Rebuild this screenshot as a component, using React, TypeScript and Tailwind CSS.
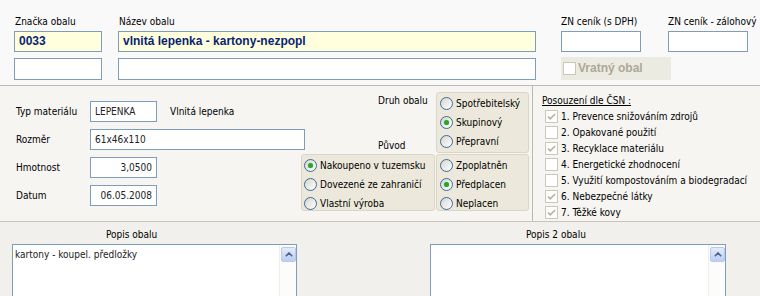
import React from "react";

const font = { fontFamily: '"DejaVu Sans Condensed", "Liberation Sans", Arial, sans-serif' };
const boldFont = { fontFamily: '"Liberation Sans", Arial, sans-serif' };

function Field({
  className,
  children,
}: {
  className?: string;
  children?: React.ReactNode;
}) {
  return (
    <div
      className={`flex items-center border border-[#7f9db9] bg-white px-[4px] text-[10px] text-[#222] ${className ?? ""}`}
    >
      {children}
    </div>
  );
}

function Radio({ label, checked }: { label: string; checked?: boolean }) {
  return (
    <div className="flex h-[19px] items-center gap-[3px] whitespace-nowrap">
      <span className="flex h-[13px] w-[13px] shrink-0 items-center justify-center rounded-full border border-[#3f6a95] bg-linear-to-br from-[#d6d6d0] to-white">
        {checked && (
          <span className="h-[5px] w-[5px] rounded-full bg-[#2aa52a] shadow-[0_0_1px_#6cd36c]" />
        )}
      </span>
      <span>{label}</span>
    </div>
  );
}

function Check({ label, checked }: { label: string; checked?: boolean }) {
  return (
    <div className="flex h-[16px] items-center gap-[3px] whitespace-nowrap">
      <span className="flex h-[13px] w-[13px] shrink-0 items-center justify-center border border-[#cac8bb] bg-white">
        {checked && (
          <svg width="9" height="9" viewBox="0 0 9 9">
            <path d="M1 4.5 L3.3 6.8 L8 2" fill="none" stroke="#b4b1a2" strokeWidth="1.6" />
          </svg>
        )}
      </span>
      <span>{label}</span>
    </div>
  );
}

function ScrollUp() {
  return (
    <div className="flex h-[15px] w-[15px] items-center justify-center rounded-[2px] border border-[#b8c9ee] bg-linear-to-b from-[#e3ebfd] to-[#bccdf5]">
      <svg width="8" height="5" viewBox="0 0 8 5">
        <path d="M0.8 4.2 L4 1 L7.2 4.2" fill="none" stroke="#4d6185" strokeWidth="1.6" />
      </svg>
    </div>
  );
}

function Memo({ width, text }: { width: string; text?: string }) {
  return (
    <div className={`flex h-[60px] border border-[#7f9db9] bg-white ${width}`}>
      <div className="flex-1 px-[2px] pt-[3px] text-[10px] leading-[13px] text-[#222]">{text}</div>
      <div className="w-[17px] border-l border-[#efeee8] bg-[#fcfcfb] pl-px pt-[2px]">
        <ScrollUp />
      </div>
    </div>
  );
}

export default function App() {
  return (
    <div
      style={font}
      className="h-[296px] w-[760px] overflow-hidden bg-[#f1f0ec] text-[10px] leading-[13px] text-black"
    >
      {/* top: code and name */}
      <div className="flex h-[86px] border-b border-[#bcb8ab] bg-[#f9f9fa] pl-[14px]">
        <div className="flex w-[88px] shrink-0 flex-col">
          <div className="h-[31px] whitespace-nowrap pl-px pt-[15px]">Značka obalu</div>
          <Field className="h-[21px] !bg-[#ffffdd] font-bold !text-[12px] !text-[#0a1f73]">
            <span style={boldFont}>0033</span>
          </Field>
          <Field className="mt-[6px] h-[22px]" />
        </div>
        <div className="ml-[16px] flex w-[418px] shrink-0 flex-col">
          <div className="h-[31px] pl-px pt-[15px]">Název obalu</div>
          <Field className="h-[21px] !bg-[#ffffdd] font-bold !text-[12px] !text-[#0a1f73]">
            <span style={boldFont}>vlnitá lepenka - kartony-nezpopl</span>
          </Field>
          <Field className="mt-[6px] h-[22px]" />
        </div>
        <div className="ml-[25px] flex w-[80px] shrink-0 flex-col">
          <div className="h-[31px] whitespace-nowrap pt-[15px]">ZN ceník (s DPH)</div>
          <Field className="h-[21px]" />
          <div className="mt-[5px] flex h-[23px] w-[110px] items-center gap-[2px] whitespace-nowrap bg-[#ecebe2] pl-[2px] text-[12px] font-bold text-[#aca899]">
            <span className="h-[13px] w-[13px] shrink-0 border border-[#cac8bb] bg-white" />
            <span style={boldFont}>Vratný obal</span>
          </div>
        </div>
        <div className="ml-[27px] flex w-[80px] shrink-0 flex-col">
          <div className="h-[31px] whitespace-nowrap pt-[15px]">ZN ceník - zálohový</div>
          <Field className="h-[21px]" />
        </div>
      </div>

      {/* middle: material, kind, assessment */}
      <div className="flex h-[136px] border-b border-[#c9c5b8] bg-[#f6f5f2]">
        <div className="flex w-[533px] shrink-0 border-r border-[#bcb8ab]">
          <div className="flex w-[301px] shrink-0 flex-col gap-[7px] pl-[16px] pt-[15px]">
            <div className="flex h-[21px] items-center">
              <span className="w-[74px] shrink-0">Typ materiálu</span>
              <Field className="h-[21px] w-[67px] shrink-0">LEPENKA</Field>
              <span className="ml-[13px] whitespace-nowrap">Vlnitá lepenka</span>
            </div>
            <div className="flex h-[21px] items-center">
              <span className="w-[74px] shrink-0">Rozměr</span>
              <Field className="h-[21px] w-[215px] shrink-0">61x46x110</Field>
            </div>
            <div className="flex h-[21px] items-center">
              <span className="w-[74px] shrink-0">Hmotnost</span>
              <Field className="h-[21px] w-[67px] shrink-0 justify-end">3,0500</Field>
            </div>
            <div className="flex h-[21px] items-center">
              <span className="w-[74px] shrink-0">Datum</span>
              <Field className="h-[21px] w-[67px] shrink-0 justify-end">06.05.2008</Field>
            </div>
          </div>

          <div className="flex w-[229px] shrink-0 flex-col pt-[6px]">
            <div className="flex">
              <div className="ml-[77px] flex h-[61px] w-[58px] flex-col justify-between whitespace-nowrap pb-[1px] pt-[2px]">
                <span>Druh obalu</span>
                <span>Původ</span>
              </div>
              <div className="h-[61px] w-[93px] rounded-[3px] border border-[#d9d6c8] bg-[#ece9dc] pl-[3px] pt-px">
                <Radio label="Spotřebitelský" />
                <Radio label="Skupinový" checked />
                <Radio label="Přepravní" />
              </div>
            </div>
            <div className="mt-px flex gap-[1px]">
              <div className="h-[57px] w-[134px] rounded-[3px] border border-[#d9d6c8] bg-[#ece9dc] pl-[2px] pt-[1px]">
                <Radio label="Nakoupeno v tuzemsku" checked />
                <Radio label="Dovezené ze zahraničí" />
                <Radio label="Vlastní výroba" />
              </div>
              <div className="h-[57px] w-[93px] rounded-[3px] border border-[#d9d6c8] bg-[#ece9dc] pl-[3px] pt-[1px]">
                <Radio label="Zpoplatněn" />
                <Radio label="Předplacen" checked />
                <Radio label="Neplacen" />
              </div>
            </div>
          </div>
        </div>

        <div className="flex flex-1 flex-col pl-[9px] pt-[8px]">
          <div className="mb-[1px] whitespace-nowrap underline">Posouzení dle ČSN :</div>
          <div className="pl-[3px]">
            <Check label="1. Prevence snižováním zdrojů" checked />
            <Check label="2. Opakované použití" />
            <Check label="3. Recyklace materiálu" checked />
            <Check label="4. Energetické zhodnocení" />
            <Check label="5. Využití kompostováním a biodegradací" />
            <Check label="6. Nebezpečné látky" checked />
            <Check label="7. Těžké kovy" checked />
          </div>
        </div>
      </div>

      {/* bottom: descriptions */}
      <div className="flex pt-[6px]">
        <div className="ml-[12px] flex flex-col">
          <div className="ml-[94px] h-[16px] whitespace-nowrap">Popis obalu</div>
          <Memo width="w-[285px]" text="kartony - koupel. předložky" />
        </div>
        <div className="ml-[133px] flex flex-col">
          <div className="ml-[96px] h-[16px] whitespace-nowrap">Popis 2 obalu</div>
          <Memo width="w-[296px]" />
        </div>
      </div>
    </div>
  );
}
